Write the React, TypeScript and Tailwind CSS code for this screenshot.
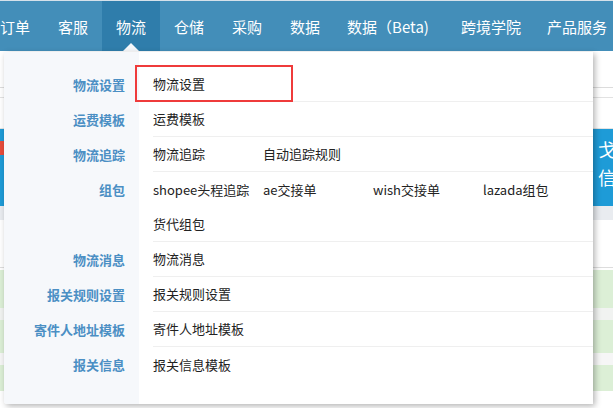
import React from "react";

const font = { fontFamily: '"Noto Sans CJK SC", "Noto Sans", sans-serif' };

const navItems = [
  { t: "订单", cls: "px-[14px]" },
  { t: "客服", cls: "px-[14px]" },
  { t: "物流", cls: "px-[14px] bg-[#2f7dab] relative", active: true },
  { t: "仓储", cls: "px-[14px]" },
  { t: "采购", cls: "px-[14px]" },
  { t: "数据", cls: "px-[14px]" },
  { t: "数据（Beta)", cls: "pl-[13px] pr-[19px]" },
  { t: "跨境学院", cls: "px-[13px]" },
  { t: "产品服务", cls: "px-[13px]" },
];

type Row = { label: string; items: string[][]; last?: boolean };

const rows: Row[] = [
  { label: "物流设置", items: [["物流设置"]] },
  { label: "运费模板", items: [["运费模板"]] },
  { label: "物流追踪", items: [["物流追踪", "自动追踪规则"]] },
  { label: "组包", items: [["shopee头程追踪", "ae交接单", "wish交接单", "lazada组包"], ["货代组包"]] },
  { label: "物流消息", items: [["物流消息"]] },
  { label: "报关规则设置", items: [["报关规则设置"]] },
  { label: "寄件人地址模板", items: [["寄件人地址模板"]] },
  { label: "报关信息", items: [["报关信息模板"]], last: true },
];

export default function App() {
  return (
    <div className="w-[613px] h-[408px] relative overflow-hidden bg-white" style={font}>
      {/* Nav */}
      <div className="h-[1px] bg-[#d5e1ea]" />
      <nav className="h-[50px] bg-[#438eb9] flex ml-[-14px] text-white text-[15px]">
        {navItems.map((n) => (
          <div key={n.t} className={`h-full flex items-center whitespace-nowrap ${n.cls}`}>
            <span className="leading-none">{n.t}</span>
            {n.active && (
              <div className="absolute left-1/2 bottom-0 -translate-x-1/2 w-0 h-0 border-l-[8px] border-r-[8px] border-b-[8px] border-l-transparent border-r-transparent border-b-[#f6f8fb]" />
            )}
          </div>
        ))}
      </nav>

      {/* Background page (mostly hidden behind dropdown) */}
      <div className="flex flex-col">
        <div className="h-[37px] border-b border-[#dcdcdc]" />
        <div className="h-[10px] border-b border-[#e2e2e2]" />
        <div className="h-[31px] border-b border-[#e4e4e4]" />
        <div className="h-[77px] bg-[#1e9bd7] flex">
          <div className="w-[4px] h-[14px] mt-[12px] bg-[#e74c3c]" />
          <div className="flex-1" />
          <div className="w-[15px] overflow-hidden text-white text-[18px] leading-[28px] pt-[6px]">戈<br />信</div>
        </div>
        <div className="h-[14px] bg-[#e9ecf0]" />
        <div className="h-[48px] border-b border-[#dddddd]" />
        <div className="h-[38px] mt-[2px] bg-[#dcefd6]" />
        <div className="h-[12px] bg-[#f1f3f1]" />
        <div className="h-[33px] bg-[#dcefd6]" />
        <div className="h-[12px] bg-[#f6f6f6]" />
        <div className="h-[26px] bg-[#dcefd6]" />
      </div>

      {/* Dropdown panel */}
      <div className="absolute left-[4px] top-[52px] w-[589px] h-[352px] flex shadow-[2px_2px_6px_rgba(0,0,0,0.3)] rounded-bl-[3px]">
        <div className="w-[135px] bg-[#f6f8fb] pt-[15px] flex flex-col rounded-bl-[3px]">
          {rows.map((r) => (
            <div
              key={r.label}
              className="pr-[14px] text-right text-[13px] font-bold text-[#4b8fc4]"
              style={{ height: 35 * r.items.length }}
            >
              <div className="h-[35px] leading-[35px]">{r.label}</div>
            </div>
          ))}
        </div>
        <div className="flex-1 bg-white pt-[15px] relative">
          <div className="absolute left-[-4px] top-[13px] w-[158px] h-[37px] border-2 border-[#ef3b3b]" />
          {rows.map((r) => (
            <div key={r.label} className={`ml-[14px] ${r.last ? "" : "border-b border-[#efefef]"}`}>
              {r.items.map((line, i) => (
                <div key={i} className="flex items-center text-[13px] text-[#222]" style={{ height: i === r.items.length - 1 && !r.last ? 34 : 35 }}>
                  {line.map((it) => (
                    <div key={it} className="w-[110px] whitespace-nowrap">{it}</div>
                  ))}
                </div>
              ))}
            </div>
          ))}
        </div>
      </div>
    </div>
  );
}
